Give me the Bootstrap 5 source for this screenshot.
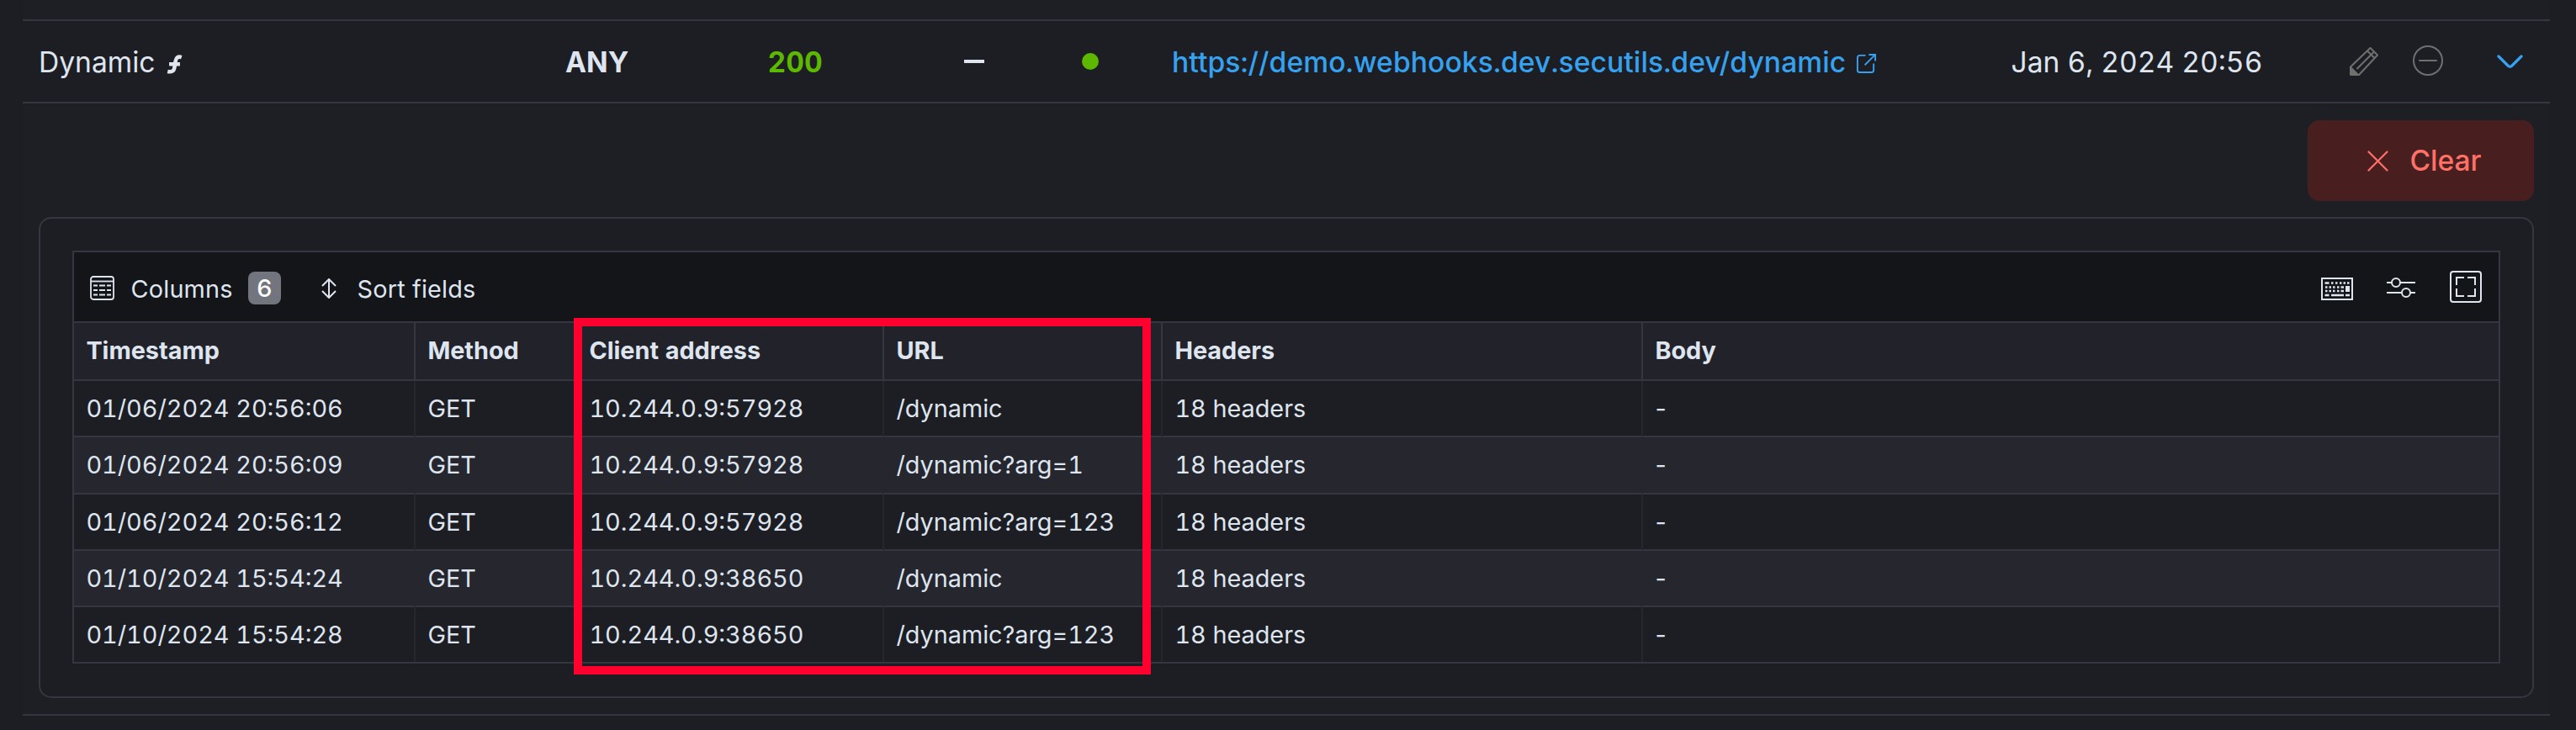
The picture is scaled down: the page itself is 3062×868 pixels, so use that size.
<!DOCTYPE html>
<html lang="en" data-bs-theme="dark">
<head>
<meta charset="utf-8">
<title>Responders</title>
<link rel="stylesheet" href="https://cdn.jsdelivr.net/npm/bootstrap@5.3.0/dist/css/bootstrap.min.css">
<style>
body{--line:#343741;--ink:#dfe5ef;background:#1d1e24;color:var(--ink);font-family:Inter,sans-serif;font-size:33.6px;line-height:48px;overflow:hidden;height:868px}
svg{display:block;flex:none}
.listing{margin:0 31px 0 27px;border-bottom:2px solid var(--line)}
.prev{height:23px;background:#1e1f25}
.item-row{height:100px;border-top:2px solid var(--line);border-bottom:2px solid var(--line);display:grid;grid-template-columns:626px 240.5px 233.5px 140px 107px 997.5px 402.5px 1fr;align-items:center;padding-left:19px;white-space:nowrap;font-feature-settings:"tnum"}
.txt{padding-top:2px}
.item-row a{color:#36a2ef;font-weight:500;letter-spacing:.1px}
.ok{color:#5cb800}
.dot{width:20px;height:20px;background:#5cb800}
.fx{margin:4px 0 0 13px}
.ext{margin:3px 0 0 12px}
.minus{margin:-2px 0 0 41px}
.chev{margin-left:64px}
.details{background:#1e1f25;padding:20px 19px 19px}
.clear-btn{width:269px;height:96px;border-radius:14px;background:#481f1e;color:#ff7168;border:0;font-size:33.6px;line-height:48px;font-weight:500;padding:0 0 0 9px;gap:25px}
.panel{margin-top:19px;height:572px;border:2px solid var(--line);border-radius:15px;background:#1d1e24;padding:38px}
.datagrid{border:2px solid var(--line);position:relative;font-size:28.8px;line-height:44px;height:491px}
.toolbar{height:84px;background:#141519;border-bottom:2px solid var(--line);padding:5px 20px 0 19px;letter-spacing:.2px}
.toolbar>svg,.count{margin-top:-2px}
.cols{margin-left:19.5px;width:120.5px}
.count{margin-left:19px;width:39px;height:39px;border-radius:8px;background:#72757e;color:#fff;font-size:28.8px;line-height:40px;font-weight:500}
.sort{margin-left:47.5px}
.sf{margin-left:25px}
.tools{gap:40px}
.full{margin:-5px 0 0 1px}
.sliders{margin-top:-3px}
.grid-row{display:grid;grid-template-columns:406px 192px 365px 331px 571px 1fr;height:67px;font-feature-settings:"tnum"}
.grid-row>div{padding:11px 0 0 14.4px;border-right:2px solid #25262e;border-bottom:2px solid var(--line);white-space:nowrap}
.grid-row>div:last-child{border-right:0;font-feature-settings:normal}
.grid-row.head{height:69px;background:#21222a;font-weight:700}
.grid-row.head>div{border-right-color:var(--line)}
.striped{background:#25262e}
.taller{height:68px}
.grid-row.final{height:65px}
.grid-row.final>div{border-bottom:0}
.marker{position:absolute;left:594px;top:78px;width:686px;height:424px;border:10px solid #ff002f}
</style>
</head>
<body>
<main class="listing">
  <div class="prev"></div>
  <div class="item-row">
    <div class="d-flex align-items-center txt"><span>Dynamic</span>
      <svg class="fx" width="19" height="23" viewBox="0 0 20 25" fill="none" stroke="#dfe5ef" stroke-width="5"><path d="M19 3.4C14.5 2 12 3.5 11.3 8L9.7 17.500C9 21.500 6 22.800 1 21.700M3 12.300h14"/></svg></div>
    <div class="fw-bold txt">ANY</div>
    <div class="fw-bold ok txt">200</div>
    <div><svg width="24" height="4"><path fill="#dfe5ef" d="M0 0h24v4H0z"/></svg></div>
    <div><div class="dot rounded-circle"></div></div>
    <div class="txt"><a href="#" class="text-decoration-none d-flex align-items-center"><span>https://demo.webhooks.dev.secutils.dev/dynamic</span>
      <svg class="ext" width="25" height="25" viewBox="0 0 26 26" fill="none" stroke="#36a2ef" stroke-width="2"><path d="M12 3H5Q2 3 2 6v15q0 3 3 3h14q3 0 3-3v-8M16 2h8v8M24 2 11 15"/></svg></a></div>
    <div class="txt">Jan 6, 2024 20:56</div>
    <div class="d-flex align-items-center">
      <svg width="34" height="34" viewBox="0 0 34 34" fill="none" stroke="#6f6f70" stroke-width="2" stroke-linejoin="round"><path d="M24.500 1 33 9.500 11 33H2Q1 33 1 32V23.500zM8.500 26 29 5.500"/><path d="M21 4.500l8.500 8.500"/><path fill="#6f6f70" d="M1 24l9 9H2q-1 0-1-1z"/></svg>
      <svg class="minus" width="36" height="36" viewBox="0 0 36 36" fill="none" stroke="#6f6f70" stroke-width="2" stroke-linecap="round"><circle cx="18" cy="18" r="17"/><path d="M8 18h20"/></svg>
      <svg class="chev" width="31" height="17" viewBox="0 0 31 17" fill="none" stroke="#36a2ef" stroke-width="3.200" stroke-linecap="round" stroke-linejoin="round"><path d="M2 2l11.500 11.500q2 1.500 4 0L29 2"/></svg>
    </div>
  </div>
  <section class="details">
    <div class="d-flex justify-content-end">
      <button class="btn clear-btn d-flex align-items-center justify-content-center"><svg width="25" height="25" viewBox="0 0 25 25" fill="none" stroke="#ff7168" stroke-width="2.200" stroke-linecap="round"><path d="M1.500 1.500l22 22M23.500 1.500l-22 22"/></svg>Clear</button>
    </div>
    <div class="panel">
      <div class="datagrid">
        <div class="toolbar d-flex align-items-center">
          <svg width="29" height="29" viewBox="0 0 29 29" fill="none" stroke="#dfe5ef" stroke-width="1.800"><rect x="1" y="1" width="27" height="27" rx="3"/><path d="M1 6.500h27"/><path d="M4 11.500h5m2 0h7m2 0h5M4 17h5m2 0h7m2 0h5M4 22.500h5m2 0h7m2 0h5"/></svg>
          <span class="cols">Columns</span><span class="count text-center">6</span>
          <svg class="sort" width="18" height="24" viewBox="0 0 18 24" fill="none" stroke="#dfe5ef" stroke-width="2"><path d="M9 2v20M1 9l8-8 8 8M1 15l8 8 8-8"/></svg>
          <span class="sf">Sort fields</span>
          <div class="ms-auto d-flex align-items-center tools">
            <svg width="38" height="27" viewBox="0 0 38 27" fill="none" stroke="#dfe5ef" stroke-width="2"><path d="M1 1h36v25H1z"/><path stroke-width="2.500" d="M4.500 6.500h5m2.500 0h2.500m2.500 0h2.500m2.500 0h2.500m2 0h2.500m2 0h2.500M5 11.500h2.500m2 0H12m2 0h2.500m2.500 0h2.500m2 0H27M5 16h2.500m2 0H12m2 0h2.500m2.500 0h2.500m2 0H27M4.500 21h5m2.500 0h15m2 0h5"/><path fill="#dfe5ef" d="M30 11h3v5h-3z"/></svg>
            <svg class="sliders" width="34" height="24" viewBox="0 0 34 24" fill="none" stroke="#dfe5ef" stroke-width="2"><path d="M0 6h6m10 0h18M0 18h18m10 0h6"/><circle cx="11" cy="6" r="5"/><circle cx="23" cy="18" r="5"/></svg>
            <svg class="full" width="38" height="38" viewBox="0 0 38 38" fill="none" stroke="#dfe5ef" stroke-width="2"><rect x="1" y="1" width="36" height="36" rx="3"/><path d="M8 17V8h9M21 8h9v9M30 21v9h-9M17 30H8v-9"/></svg>
          </div>
        </div>
        <div class="grid-row head"><div>Timestamp</div><div>Method</div><div>Client address</div><div>URL</div><div>Headers</div><div>Body</div></div>
        <div class="grid-row"><div>01/06/2024 20:56:06</div><div>GET</div><div>10.244.0.9:57928</div><div>/dynamic</div><div>18 headers</div><div>-</div></div>
        <div class="grid-row striped taller"><div>01/06/2024 20:56:09</div><div>GET</div><div>10.244.0.9:57928</div><div>/dynamic?arg=1</div><div>18 headers</div><div>-</div></div>
        <div class="grid-row"><div>01/06/2024 20:56:12</div><div>GET</div><div>10.244.0.9:57928</div><div>/dynamic?arg=123</div><div>18 headers</div><div>-</div></div>
        <div class="grid-row striped"><div>01/10/2024 15:54:24</div><div>GET</div><div>10.244.0.9:38650</div><div>/dynamic</div><div>18 headers</div><div>-</div></div>
        <div class="grid-row final"><div>01/10/2024 15:54:28</div><div>GET</div><div>10.244.0.9:38650</div><div>/dynamic?arg=123</div><div>18 headers</div><div>-</div></div>
        <div class="marker"></div>
      </div>
    </div>
  </section>
</main>
<script src="https://cdn.jsdelivr.net/npm/bootstrap@5.3.0/dist/js/bootstrap.bundle.min.js"></script>
</body>
</html>
